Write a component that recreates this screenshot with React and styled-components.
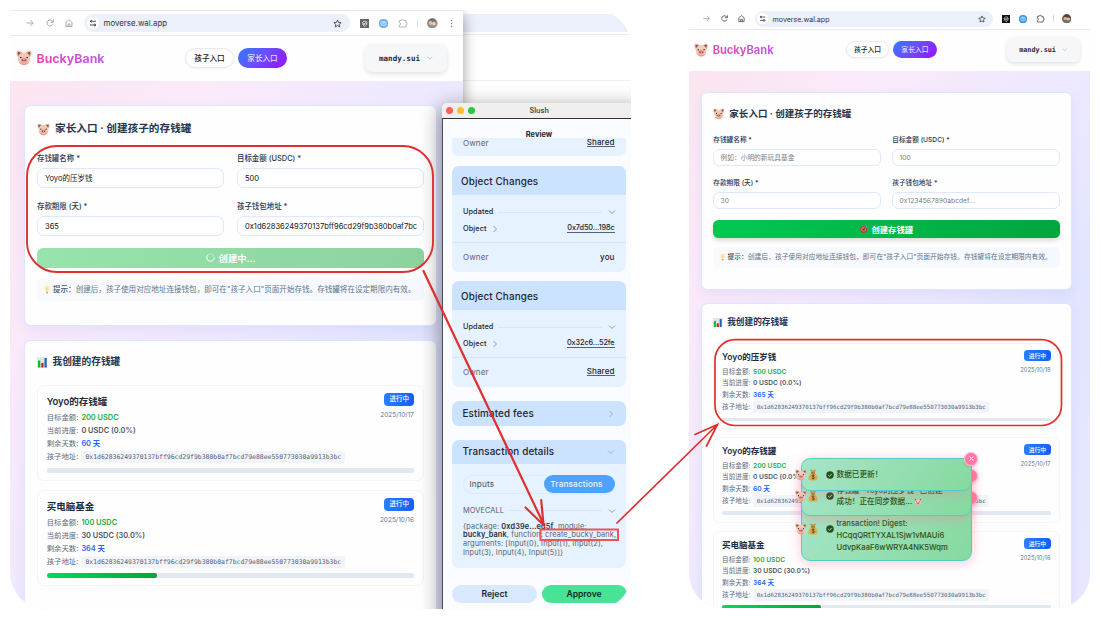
import React from "react";
import styled, { createGlobalStyle, css } from "styled-components";

const Global = createGlobalStyle`
  * { box-sizing: border-box; }
  html, body { margin: 0; padding: 0; background: #fff; }
  body { width: 1100px; height: 619px; overflow: hidden; }
`;

const sans = `Inter, "Noto Sans CJK SC", sans-serif`;
const mono = `"DejaVu Sans Mono", "Liberation Mono", monospace`;

const ADDRESS = "0x1d62836249370137bff96cd29f9b380b0af7bcd79e88ee550773030a9913b3bc";

/* ---------- canvas ---------- */

const Canvas = styled.main`
  position: relative;
  width: 1100px;
  height: 619px;
  overflow: hidden;
  background: #fff;
  font-family: ${sans};
  white-space: nowrap;
  line-height: 1;
`;

const Shot = styled.section`
  position: absolute;
  left: ${(p) => p.$x}px;
  top: ${(p) => p.$y}px;
  width: ${(p) => p.$w}px;
  height: ${(p) => p.$h}px;
  border-radius: ${(p) => p.$r};
  overflow: hidden;
`;

const BackWindow = styled.div`
  height: 100%;
  display: flex;
  flex-direction: column;
  background: linear-gradient(#fff, #fdfdfe);
`;
const BackBar = styled.div`
  height: 25px;
  padding-top: 4px;
  border-bottom: 1px solid #ececee;
  &::before { content: ""; display: block; height: 18px; background: #ebf0fa; }
`;
const BackHeader = styled.div`
  height: 46px;
  border-bottom: 1px solid #f0f0f2;
`;

const Browser = styled.div`
  position: absolute;
  left: 0;
  top: 1px;
  width: ${(p) => p.$w}px;
  height: 680px;
  zoom: ${(p) => p.$zoom};
  display: flex;
  flex-direction: column;
  border-top-right-radius: 3px;
  overflow: hidden;
  background: #fff;
`;
const BrowserShadow = styled.div`
  position: absolute;
  left: 0;
  top: 1px;
  width: 453px;
  height: 620px;
  border-top-right-radius: 3px;
  box-shadow: 0 4px 14px rgba(0, 0, 0, 0.4);
`;

/* ---------- browser toolbar ---------- */

const Toolbar = styled.div`
  flex: none;
  height: 25px;
  display: flex;
  align-items: center;
  padding: 0 7px 0 15px;
  border-bottom: 1px solid #e9e9ec;
  color: ${(p) => (p.$dim ? "#a2a3a6" : "#4b4c50")};
  > svg { flex: none; }
`;
const Url = styled.div`
  flex: none;
  width: 266px;
  height: 18px;
  margin: 0 10px 0 9.5px;
  padding: 0 8px 0 3px;
  display: flex;
  align-items: center;
  gap: 5px;
  border-radius: 9px;
  background: #ebf0fa;
  color: #333;
  font-size: 7.9px;
  > span { flex: 1; padding-top: 1.2px; }
`;
const Tune = styled.div`
  width: 12px;
  height: 12px;
  border-radius: 50%;
  background: #fff;
  display: grid;
  place-items: center;
`;
const Extensions = styled.div`
  display: flex;
  align-items: center;
  opacity: ${(p) => (p.$dim ? 0.75 : 1)};
  svg { flex: none; }
`;
const Sep = styled.i`
  width: 1px;
  height: 8px;
  margin: 0 9px 0 9px;
  background: #cfdcf8;
`;

/* ---------- site ---------- */

const Header = styled.header`
  flex: none;
  height: 45px;
  display: flex;
  align-items: center;
  padding: 0 0 2px 6px;
  background: #fefefe;
  > * { flex: none; }
`;
const Brand = styled.div`
  width: 169px;
  padding-top: 1.5px;
  display: flex;
  align-items: center;
  gap: 4.5px;
  font-size: 12.35px;
  font-weight: 700;
  span {
    padding: 2.5px 0 1px;
    background: linear-gradient(90deg, #ee47ad, #bf58ee);
    -webkit-background-clip: text;
    color: transparent;
  }
`;
const Tab = styled.button`
  width: 49px;
  height: 20px;
  margin-right: 4px;
  padding: 0 0 1px;
  border-radius: 10px;
  font: 500 7.6px ${sans};
  color: ${(p) => (p.$active ? "#dcdcff" : "#222")};
  border: ${(p) => (p.$active ? "0" : "1px solid #e9eaee")};
  background: ${(p) => (p.$active ? "linear-gradient(135deg, #2f7bff, #6a50ff 45%, #9810fa)" : "#fff")};
  box-shadow: ${(p) => (p.$active ? "none" : "0 1px 2px rgba(0,0,0,.05)")};
`;
const Account = styled.div`
  width: 82px;
  height: 28px;
  margin-left: 74px;
  padding-top: 1px;
  display: flex;
  align-items: center;
  justify-content: center;
  gap: 7px;
  border-radius: 7px;
  background: #f6f7f9;
  box-shadow: 0 2px 5px rgba(0, 0, 0, 0.11);
  color: #1e293b;
  font: 700 7.6px ${mono};
`;
const Page = styled.div`
  flex: 1;
  padding: 24.2px 0 0 13.6px;
  display: flex;
  flex-direction: column;
  gap: 14.3px;
  background: linear-gradient(125deg, #fbe5f0 0%, #faeafa 22%, #eee9fe 46%, #e2e5ff 66%, #e9e8ff 100%);
`;
const Card = styled.div`
  flex: none;
  width: 413.8px;
  height: ${(p) => p.$h}px;
  padding: 14px 12px 0 12.4px;
  border: 1.3px solid #dbe6ff;
  border-radius: 7px;
  background: #fefeff;
  box-shadow: 0 5px 12px rgba(99, 102, 241, 0.09);
`;
const CardTitle = styled.h2`
  margin: 0;
  height: ${(p) => p.$h}px;
  padding-top: ${(p) => p.$top || 0}px;
  display: flex;
  align-items: flex-start;
  gap: ${(p) => p.$gap}px;
  font-size: ${(p) => p.$size}px;
  font-weight: 600;
  color: #26344b;
  svg { flex: none; margin-top: ${(p) => p.$lift || 0}px; }
`;
const FormGrid = styled.div`
  display: grid;
  grid-template-columns: 187px 187px;
  column-gap: 13px;
  grid-auto-rows: 48px;
`;
const Field = styled.label`
  display: flex;
  flex-direction: column;
  gap: 5px;
  font-size: 7.45px;
  font-weight: 500;
  line-height: 9px;
  color: #26344b;
`;
const Value = styled.div`
  height: 19.5px;
  padding: 1px 7px 0;
  display: flex;
  align-items: center;
  border: 1.4px solid #dbe8fe;
  border-radius: 7px;
  background: #fff;
  font-size: 7.53px;
  font-weight: 400;
  overflow: hidden;
  color: ${(p) => (p.$placeholder ? "#7b7d82" : "#111")};
`;
const Submit = styled.button`
  width: 387px;
  height: 19.5px;
  margin: -2px 0 10px;
  padding: 0;
  display: flex;
  align-items: center;
  justify-content: center;
  gap: 4px;
  border: 0;
  border-radius: 6px;
  color: #fff;
  font: 600 9.3px ${sans};
  ${(p) =>
    p.$busy
      ? css`background: linear-gradient(100deg, #97e4ac, #8cd29f);`
      : css`
          background: linear-gradient(100deg, #00c950, #00a63e);
          box-shadow: 0 3px 5px rgba(0, 0, 0, 0.14);
        `}
`;
const Tip = styled.p`
  width: 387px;
  height: 23.5px;
  margin: 0;
  padding-left: 7px;
  display: flex;
  align-items: center;
  border-radius: 6px;
  background: linear-gradient(90deg, #f9fafc, #f5f9ff);
  font-size: 7.57px;
  color: #64748b;
  svg { margin-right: 3px; }
  b { font-weight: 500; color: #475569; }
`;
const Items = styled.div`
  display: flex;
  flex-direction: column;
  gap: 8.8px;
`;
const Item = styled.article`
  width: 387px;
  height: 96.2px;
  padding: 7.3px 9px 0 8.7px;
  border: 1px solid #f4f5f8;
  border-radius: 7px;
  background: #fefefe;
`;
const ItemTop = styled.div`
  display: flex;
  justify-content: space-between;
  height: 75.2px;
`;
const ItemName = styled.h3`
  margin: 3px 0 4px;
  font-size: 9.5px;
  line-height: 11px;
  font-weight: 600;
  color: #1e293b;
`;
const Line = styled.div`
  height: 13px;
  display: flex;
  align-items: center;
  gap: 3px;
  font-size: 7.4px;
  color: #5b6a80;
  b { font-weight: 600; color: ${(p) => p.$color || "#475569"}; }
`;
const Code = styled.code`
  height: 12.5px;
  padding: 0 4px;
  display: flex;
  align-items: center;
  border-radius: 2px;
  background: #f1f5f9;
  color: #55637a;
  font: 6.45px ${mono};
`;
const Side = styled.div`
  display: flex;
  flex-direction: column;
  align-items: flex-end;
  gap: 6px;
  color: #64748b;
  font-size: 6.5px;
`;
const Badge = styled.span`
  width: 29.5px;
  height: 12.5px;
  display: grid;
  place-items: center;
  border-radius: 4px;
  background: linear-gradient(90deg, #2b7fff, #155dfc);
  color: #fff;
  font-size: 6.5px;
  font-weight: 500;
`;
const Track = styled.div`
  height: 4.2px;
  border-radius: 2px;
  background: #e2e8f0;
  overflow: hidden;
  &::before {
    content: "";
    display: block;
    height: 100%;
    width: ${(p) => p.$pct}%;
    border-radius: 2px;
    background: linear-gradient(90deg, #00d864, #00a63e);
  }
`;

/* ---------- wallet window ---------- */

const Wallet = styled.aside`
  position: absolute;
  left: 432px;
  top: 93px;
  width: 200px;
  height: 520px;
  display: flex;
  flex-direction: column;
  border-radius: 5px 0 0 0;
  background: #fafcff;
  box-shadow: 0 6px 20px 2px rgba(0, 0, 0, 0.42);
  color: #1c2530;
`;
const TitleBar = styled.div`
  flex: none;
  height: 16px;
  padding: 0 5px 0 4px;
  display: flex;
  align-items: center;
  gap: 4px;
  border-radius: 5px 0 0 0;
  background: #f0efed;
  border-bottom: 1.5px solid #303236;
  font-size: 7.2px;
  font-weight: 600;
  color: #4a4a4a;
  span { margin-left: 50.5px; }
`;
const Light = styled.i`
  width: 7px;
  height: 7px;
  border-radius: 50%;
  background: ${(p) => p.$c};
`;
const WalletBody = styled.div`
  flex: 1;
  display: flex;
  flex-direction: column;
  align-items: flex-start;
  padding-left: 9px;
  border-left: 1.5px solid #4b4d55;
`;
const ReviewTitle = styled.div`
  width: 174px;
  height: 19px;
  padding-top: 11.5px;
  text-align: center;
  font-size: 7.5px;
  font-weight: 700;
`;
const Panel = styled.div`
  width: 174px;
  height: ${(p) => p.$h}px;
  margin-bottom: ${(p) => p.$mb}px;
  border-radius: ${(p) => (p.$open ? "0 0 7px 7px" : "7px")};
  overflow: ${(p) => (p.$open ? "visible" : "hidden")};
  background: #e6f2ff;
`;
const PanelHead = styled.div`
  height: ${(p) => p.$h}px;
  padding: ${(p) => p.$pt || 0}px 11px 0 ${(p) => p.$pad}px;
  display: flex;
  align-items: center;
  justify-content: space-between;
  background: #cce3ff;
  font-size: 9.9px;
  font-weight: 500;
  letter-spacing: 0.12px;
`;
const Row = styled.div`
  height: ${(p) => p.$h}px;
  padding: ${(p) => p.$pt || 0}px ${(p) => (p.$icon ? 10.5 : 11.5)}px ${(p) => p.$pb || 0}px 11px;
  display: flex;
  align-items: center;
  justify-content: space-between;
  font-size: ${(p) => p.$size || 7.5}px;
  font-weight: ${(p) => p.$weight || 500};
  letter-spacing: 0.1px;
  color: ${(p) => (p.$muted ? "#56616d" : "inherit")};
  border-top: ${(p) => (p.$line ? "1px solid #d3e6fb" : "0")};
  em { font-style: normal; font-weight: 400; color: #5b6673; }
`;
const Rule = styled.i`
  flex: 1;
  height: 1px;
  margin: 0 6px 0 5px;
  background: #d5e7fb;
`;
const Link = styled.span`
  padding-bottom: 0.5px;
  border-bottom: 1px solid #58626e;
  letter-spacing: ${(p) => (p.$tight ? "-0.1px" : "inherit")};
`;
const WithIcon = styled.span`
  display: flex;
  align-items: center;
  gap: 4px;
`;
const Segments = styled.div`
  width: 152px;
  height: 18.5px;
  margin: 11px 0 0 10.5px;
  padding-left: 7px;
  display: flex;
  align-items: center;
  justify-content: space-between;
  border-radius: 10px;
  box-shadow: inset 0 0 0 1px #d9eafd;
  font-size: 8.2px;
  letter-spacing: 0.15px;
  color: #46515d;
`;
const SegmentOn = styled.span`
  width: 71px;
  height: 18px;
  display: grid;
  place-items: center;
  padding-right: 5px;
  border-radius: 9px;
  background: #4da2ff;
  color: #eef6ff;
  font-weight: 500;
`;
const CallText = styled.p`
  margin: 4px 0 0 11px;
  font-size: 7.35px;
  line-height: 8.7px;
  letter-spacing: 0.12px;
  color: #56616d;
  b { font-weight: 600; color: #27303a; }
`;
const Actions = styled.div`
  display: flex;
  gap: 4.5px;
`;
const Action = styled.button`
  width: 85px;
  height: 18px;
  padding: 0;
  border: 0;
  border-radius: 9px;
  background: ${(p) => p.$bg};
  color: #10291f;
  font: 600 8.6px Inter, sans-serif;
`;

/* ---------- toasts ---------- */

const Toast = styled.div`
  position: absolute;
  left: 800.5px;
  top: ${(p) => p.$top}px;
  width: 171.5px;
  height: ${(p) => p.$h}px;
  padding: 0 0 ${(p) => p.$pb}px 35px;
  display: flex;
  align-items: flex-end;
  border: 1.5px solid #4fcfc0;
  border-radius: 9px;
  background: linear-gradient(125deg, #a6e5c8, #86d99f);
  box-shadow: 0 2px 12px rgba(255, 105, 150, 0.38);
  color: #2d5016;
  font-size: 7.65px;
  line-height: 11.7px;
  font-weight: 500;
  white-space: pre;
`;
const ToastText = styled.span`
  svg { vertical-align: -1.5px; }
`;
const ToastIcons = styled.div`
  position: absolute;
  left: -7px;
  bottom: ${(p) => p.$b}px;
  display: flex;
  align-items: center;
  gap: 1.5px;
  svg:last-child { margin-left: 6px; }
`;
const Close = styled.span`
  position: absolute;
  right: -7px;
  top: -7px;
  width: 14px;
  height: 14px;
  border-radius: 50%;
  border: 1px solid #ffc2d6;
  background: #ff78a8;
  display: grid;
  place-items: center;
  box-shadow: 0 1px 3px rgba(255, 90, 140, 0.35);
`;
const CloseBack = styled(Close)`
  right: auto;
  left: 964px;
  top: ${(p) => p.$y}px;
`;
const Annotations = styled.svg`
  position: absolute;
  inset: 0;
  pointer-events: none;
`;

/* ---------- icons ---------- */

const Pig = ({ s = 16 }) => (
  <svg width={s} height={s} viewBox="0 0 32 32">
    <path d="M2 2c5-1 9 1 12 5L5 15C1 12 0 6 2 2z" fill="#e8b3a2" />
    <path d="M30 2c-5-1-9 1-12 5l9 8c4-3 5-9 3-13z" fill="#e8b3a2" />
    <path d="M4 4c4 0 6 2 7 4l-5 4C4 10 3 7 4 4zM28 4c-4 0-6 2-7 4l5 4c2-2 3-5 2-8z" fill="#7d5648" />
    <path d="M16 5c8 0 12 5 12 12 0 9-5 13-12 13S4 26 4 17C4 10 8 5 16 5z" fill="#f2c8b9" />
    <path d="M5 21c2 6 6 9 11 9s9-3 11-9c-2 4-6 6-11 6S7 25 5 21z" fill="#dc9d8d" />
    <ellipse cx="16" cy="20.500" rx="6.500" ry="5" fill="#e79d95" />
    <ellipse cx="13.500" cy="20.500" rx="1.300" ry="2" fill="#7c3f3a" />
    <ellipse cx="18.500" cy="20.500" rx="1.300" ry="2" fill="#7c3f3a" />
    <circle cx="9.500" cy="15" r="1.600" fill="#352525" />
    <circle cx="22.500" cy="15" r="1.600" fill="#352525" />
  </svg>
);
const Bag = () => (
  <svg width="10" height="12" viewBox="0 0 20 24">
    <path d="M6 1l4 2 4-2 2 1-3 6H7L4 2z" fill="#c79a3c" />
    <path d="M7 8h6c4 3 6 7 6 11 0 3-2 4-5 4H6c-3 0-5-1-5-4C1 15 3 11 7 8z" fill="#d9ad4d" />
    <path d="M6 8h8" stroke="#7f5a1d" strokeWidth="1.8" />
    <path d="M13 13c-1-1.5-5-1.500-5 .7 0 2.500 5 1.300 5 3.800 0 2.200-4.500 2.200-5.500.4M10.300 11v10" stroke="#5e3e12" strokeWidth="1.500" fill="none" />
  </svg>
);
const CheckDot = () => (
  <svg width="8" height="8" viewBox="0 0 16 16">
    <circle cx="8" cy="8" r="7.500" fill="#264d1c" />
    <path d="M4.500 8.300L7 10.700l4.600-5" stroke="#a6e0b2" strokeWidth="2" fill="none" />
  </svg>
);
const Bars = () => (
  <svg width="10.500" height="11" viewBox="0 0 21 22">
    <rect width="21" height="22" fill="#e2eaf0" />
    <path d="M0 5.500h21M0 11h21M0 16.500h21M7 0v22M14 0v22" stroke="#c8d6e2" strokeWidth=".7" />
    <rect x="2" y="7" width="4.500" height="14" fill="#17b82c" />
    <rect x="8.500" y="12" width="4.500" height="9" fill="#c8201f" />
    <rect x="15" y="2" width="4.500" height="19" fill="#2463b8" />
  </svg>
);
const Bulb = () => (
  <svg width="6" height="9" viewBox="0 0 12 18">
    <path d="M6 1a5 5 0 0 1 5 5c0 3-2 4-2.500 7h-5C3 10 1 9 1 6a5 5 0 0 1 5-5z" fill="#fdeaa0" />
    <path d="M4.500 8l1.500 1 1.500-1" stroke="#d9ab4a" fill="none" />
    <path d="M4 13.500h4v3H4z" fill="#a9a9a6" />
  </svg>
);
const Target = () => (
  <svg width="9" height="9" viewBox="0 0 18 18">
    <circle cx="8" cy="10" r="7.500" fill="#c3322c" />
    <circle cx="8" cy="10" r="4.800" fill="#e9bdbb" />
    <circle cx="8" cy="10" r="3.600" fill="#c3322c" />
    <path d="M8 10L15 3" stroke="#23415c" strokeWidth="1.500" />
    <path d="M12 5l1-4 2 2 2.500 1-3 2.500z" fill="#49a5dd" />
  </svg>
);
const Chevron = ({ right, color = "#7c8b9b", s = 8 }) => (
  <svg width={s} height={s} viewBox="0 0 16 16" fill="none" stroke={color} strokeWidth="1.700">
    <path d={right ? "M5 2l6 6-6 6" : "M2 5l6 6 6-6"} />
  </svg>
);
const Arrow = () => (
  <svg width="10" height="10" viewBox="0 0 20 20" fill="none" stroke="#999a9d" strokeWidth="1.600">
    <path d="M3 10h13M10.500 4l6 6-6 6" />
  </svg>
);
const Reload = () => (
  <svg width="10" height="10" viewBox="0 0 20 20" fill="none" stroke="currentColor" strokeWidth="1.900" style={{ marginLeft: 9.500 }}>
    <path d="M15.500 12.500a6 6 0 1 1 0-5" />
    <path d="M16.500 3v5.500H11" />
  </svg>
);
const HomeIcon = () => (
  <svg width="10" height="10" viewBox="0 0 20 20" fill="none" stroke="currentColor" strokeWidth="1.800" style={{ marginLeft: 9.500 }}>
    <path d="M4 8.500L10 3.500l6 5V17H4z" />
    <path d="M8 17v-5h4v5" />
  </svg>
);
const TuneIcon = () => (
  <svg width="8" height="8" viewBox="0 0 16 16" fill="none" stroke="#333" strokeWidth="1.800">
    <path d="M2 4.500h3M8 4.500h6M14 12h-1M9 12H2" />
    <circle cx="5" cy="4.500" r="1.700" />
    <circle cx="11.500" cy="12" r="1.900" />
  </svg>
);
const Star = () => (
  <svg width="9" height="9" viewBox="0 0 20 20" fill="none" stroke="#333" strokeWidth="1.800">
    <path d="M10 2.300l2.300 5.200 5.700.6-4.300 3.800 1.200 5.600-4.900-2.900-4.900 2.900 1.200-5.600L2 8.100l5.700-.6z" />
  </svg>
);
const ExtensionIcons = ({ dim }) => (
  <Extensions $dim={dim}>
    <svg width="9" height="9" viewBox="0 0 18 18">
      <rect width="18" height="18" fill={dim ? "#333" : "#111"} />
      <path d="M4 8l4-4 5 1-3 4zM5 10l5 1 4-4-1 5-4 3z" fill="none" stroke="#e6e6e6" strokeWidth="1.400" />
    </svg>
    <svg width="9" height="9" viewBox="0 0 18 18" style={{ marginLeft: 10.500 }}>
      <rect width="18" height="18" rx="8" fill="#3f92f0" />
      <path d="M3 6q6-5 12 0v6q-6 5-12 0z" fill="#8ccbff" />
      <path d="M5 9q4 3 8 0" stroke="#3a88e8" strokeWidth="1.300" fill="none" />
    </svg>
    <svg width="10" height="10" viewBox="0 0 20 20" style={{ marginLeft: 10 }} fill="none" stroke={dim ? "#8d8e91" : "#444"} strokeWidth="1.700">
      <path d="M3 5h4a2.300 2.300 0 0 1 4.600 0H16v4a2.300 2.300 0 0 1 0 4.600V18H3v-4a2.300 2.300 0 0 0 0-4.600z" />
    </svg>
    <Sep />
    <svg width="10.500" height="10.500" viewBox="0 0 21 21">
      <circle cx="10.500" cy="10.500" r="10.500" fill="#79665a" />
      <path d="M2 8q3-7 9-7 6 1 8 7l-4-2-5 2-4-2z" fill="#4f3d33" />
      <circle cx="7.500" cy="10" r="3.800" fill="#dda98a" />
      <circle cx="14" cy="11.500" r="3.300" fill="#e5c3a6" />
      <path d="M3 16q4-3 7 0t7-1q-3 6-7 6t-7-5z" fill="#4f7d97" />
    </svg>
    {dim && (
      <svg width="3" height="9" viewBox="0 0 6 18" style={{ marginLeft: 12.500 }} fill="#555">
        <circle cx="3" cy="3" r="1.500" /><circle cx="3" cy="9" r="1.500" /><circle cx="3" cy="15" r="1.500" />
      </svg>
    )}
  </Extensions>
);
const Spinner = () => (
  <svg width="9" height="9" viewBox="0 0 18 18" fill="none" strokeWidth="1.800">
    <circle cx="9" cy="9" r="7.500" stroke="#b9ecc6" />
    <path d="M4 3.500A7.500 7.500 0 1 0 16.500 9" stroke="#f4fff6" />
  </svg>
);

/* ---------- composition ---------- */

const jar = (name, goal, progress, days, pct, date) => ({ name, goal, progress, days, pct, date });
const YOYO = jar("Yoyo的存钱罐", "200 USDC", "0 USDC (0.0%)", "60 天", 0, "2025/10/17");
const COMPUTER = jar("买电脑基金", "100 USDC", "30 USDC (30.0%)", "364 天", 30, "2025/10/16");
const GIFT = jar("Yoyo的压岁钱", "500 USDC", "0 USDC (0.0%)", "365 天", 0, "2025/10/18");

function Jar({ data }) {
  return (
    <Item>
      <ItemTop>
        <div>
          <ItemName>{data.name}</ItemName>
          <Line $color="#22ab4c">目标金额: <b>{data.goal}</b></Line>
          <Line>当前进度: <b>{data.progress}</b></Line>
          <Line $color="#2563ff">剩余天数: <b>{data.days}</b></Line>
          <Line>孩子地址: <Code>{ADDRESS}</Code></Line>
        </div>
        <Side>
          <Badge>进行中</Badge>
          {data.date}
        </Side>
      </ItemTop>
      <Track $pct={data.pct} />
    </Item>
  );
}

function BankBrowser({ width, zoom, busy, fields, jars }) {
  return (
    <Browser $w={width} $zoom={zoom}>
      <Toolbar $dim={busy}>
        <Arrow />
        <Reload />
        <HomeIcon />
        <Url>
          <Tune><TuneIcon /></Tune>
          <span>moverse.wal.app</span>
          <Star />
        </Url>
        <ExtensionIcons dim={busy} />
      </Toolbar>
      <Header>
        <Brand><Pig s={16} /><span>BuckyBank</span></Brand>
        <Tab>孩子入口</Tab>
        <Tab $active>家长入口</Tab>
        <Account>mandy.sui <Chevron s={6} color="#a3abb7" /></Account>
      </Header>
      <Page>
        <Card $h={221}>
          <CardTitle $h={34} $gap={5} $size={10.65} $top={3.500} $lift={-1}><Pig s={13} />家长入口 · 创建孩子的存钱罐</CardTitle>
          <FormGrid>
            {fields.map(([label, value]) => (
              <Field key={label}>
                {label}
                <Value $placeholder={!busy}>{value}</Value>
              </Field>
            ))}
          </FormGrid>
          <Submit $busy={busy}>
            {busy ? <Spinner /> : <Target />}
            {busy ? "创建中..." : "创建存钱罐"}
          </Submit>
          <Tip>
            <Bulb />
            <b>提示：</b>创建后，孩子使用对应地址连接钱包，即可在"孩子入口"页面开始存钱。存钱罐将在设定期限内有效。
          </Tip>
        </Card>
        <Card $h={400}>
          <CardTitle $h={29.500} $gap={5} $size={9.7} $top={2} $lift={-0.500}><Bars />我创建的存钱罐</CardTitle>
          <Items>{jars.map((j) => <Jar key={j.name} data={j} />)}</Items>
        </Card>
      </Page>
    </Browser>
  );
}

function ObjectChanges({ hash, owner, link, mb }) {
  return (
    <Panel $h={105.5} $mb={mb}>
      <PanelHead $h={28.5} $pad={9} $pt={2.500}>Object Changes</PanelHead>
      <Row $h={25} $pt={10} $size={7.3} $icon>Updated<Rule /><Chevron /></Row>
      <Row $h={22.5} $pb={4.500} $size={7.3}><WithIcon>Object <Chevron right s={8} /></WithIcon><Link $tight>{hash}</Link></Row>
      <Row $h={28} $line $size={8}><em>Owner</em>{link ? <Link>{owner}</Link> : owner}</Row>
    </Panel>
  );
}

function WalletWindow() {
  return (
    <Wallet>
      <TitleBar>
        <Light $c="#ff5f57" /><Light $c="#febc2e" /><Light $c="#28c840" />
        <span>Slush</span>
      </TitleBar>
      <WalletBody>
        <ReviewTitle>Review</ReviewTitle>
        <Panel $h={18} $mb={10} $open>
          <Row $h={9} $size={8}><em>Owner</em><Link>Shared</Link></Row>
        </Panel>
        <ObjectChanges hash="0x7d50...198c" owner="you" mb={9.5} />
        <ObjectChanges hash="0x32c6...52fe" owner="Shared" link mb={14} />
        <Panel $h={25} $mb={14}>
          <PanelHead $h={25} $pad={10.500} $pt={1.500}>Estimated fees<Chevron right color="#93a9c2" /></PanelHead>
        </Panel>
        <Panel $h={128} $mb={17}>
          <PanelHead $h={24.5} $pad={10.500} $pt={1}>Transaction details<Chevron color="#93a9c2" /></PanelHead>
          <Segments>Inputs<SegmentOn>Transactions</SegmentOn></Segments>
          <Row $h={25} $pt={9} $size={7.4} $weight={400} $icon $muted>MOVECALL<Rule /><Chevron /></Row>
          <CallText>
            {"{package: "}<b>0xd39e...ed5f</b>, module:<br />
            <b>bucky_bank</b>, function: create_bucky_bank,<br />
            arguments: [Input(0), Input(1), Input(2),<br />
            Input(3), Input(4), Input(5)]{"}"}
          </CallText>
        </Panel>
        <Actions>
          <Action $bg="#d8e9ff">Reject</Action>
          <Action $bg="#49e398">Approve</Action>
        </Actions>
      </WalletBody>
    </Wallet>
  );
}

const XMark = () => (
  <svg width="5" height="5" viewBox="0 0 10 10" stroke="#fff" strokeWidth="1.800"><path d="M1 1l8 8M9 1L1 9" /></svg>
);

export default function App() {
  return (
    <>
      <Global />
      <Canvas>
        <Shot $x={10} $y={10} $w={621} $h={599} $r="0 36px 34px 36px">
          <BackWindow><BackBar /><BackHeader /></BackWindow>
          <BrowserShadow />
          <BankBrowser
            width={453}
            zoom={1}
            busy
            fields={[
              ["存钱罐名称 *", "Yoyo的压岁钱"],
              ["目标金额 (USDC) *", "500"],
              ["存款期限 (天) *", "365"],
              ["孩子钱包地址 *", "0x1d62836249370137bff96cd29f9b380b0af7bc"],
            ]}
            jars={[YOYO, COMPUTER]}
          />
          <WalletWindow />
        </Shot>
        <Shot $x={689} $y={7} $w={401} $h={601} $r="0 0 34px 34px">
          <BankBrowser
            width={448}
            zoom={0.895}
            busy={false}
            fields={[
              ["存钱罐名称 *", "例如：小明的新玩具基金"],
              ["目标金额 (USDC) *", "100"],
              ["存款期限 (天) *", "30"],
              ["孩子钱包地址 *", "0x1234567890abcdef..."],
            ]}
            jars={[GIFT, YOYO, COMPUTER]}
          />
        </Shot>

        <Toast $top={494} $h={67} $pb={6.5}>
          <ToastText>{"transaction! Digest:\nHCqqQRtTYXAL1Sjw1vMAUi6\nUdvpKaaF6wWRYA4NK5Wqm"}</ToastText>
          <ToastIcons $b={25}><Pig s={12} /><Bag /><CheckDot /></ToastIcons>
        </Toast>
        <CloseBack $y={491} />
        <Toast $top={474} $h={41.500} $pb={6.5}>
          <ToastText>{"存钱罐 \"Yoyo的压岁钱\" 已创建\n成功！正在同步数据... "}<Pig s={8} /></ToastText>
          <ToastIcons $b={13}><Pig s={12} /><Bag /><CheckDot /></ToastIcons>
        </Toast>
        <CloseBack $y={469} />
        <Toast $top={457.500} $h={33.500} $pb={9.5}>
          <ToastText>数据已更新！</ToastText>
          <ToastIcons $b={9.500}><Pig s={12} /><Bag /><CheckDot /></ToastIcons>
          <Close><XMark /></Close>
        </Toast>

        <Annotations width="1100" height="619" fill="none" stroke="#df302f" strokeWidth="1.900" strokeLinecap="round">
          <rect x="27" y="146" width="406" height="126" rx="30" />
          <path d="M423.500 271L543.500 524M525.500 507.500L543.500 525L541.200 500" strokeWidth="2.200" />
          <rect x="540.500" y="529.500" width="77.500" height="10.500" stroke="#f25255" strokeWidth="2" strokeLinecap="butt" />
          <path d="M617 523L717.500 424.500M695 434.500L717.500 424.500L706.500 446" strokeWidth="1.700" />
          <rect x="715" y="339.700" width="346.500" height="85.800" rx="20" strokeWidth="1.700" />
        </Annotations>
      </Canvas>
    </>
  );
}
